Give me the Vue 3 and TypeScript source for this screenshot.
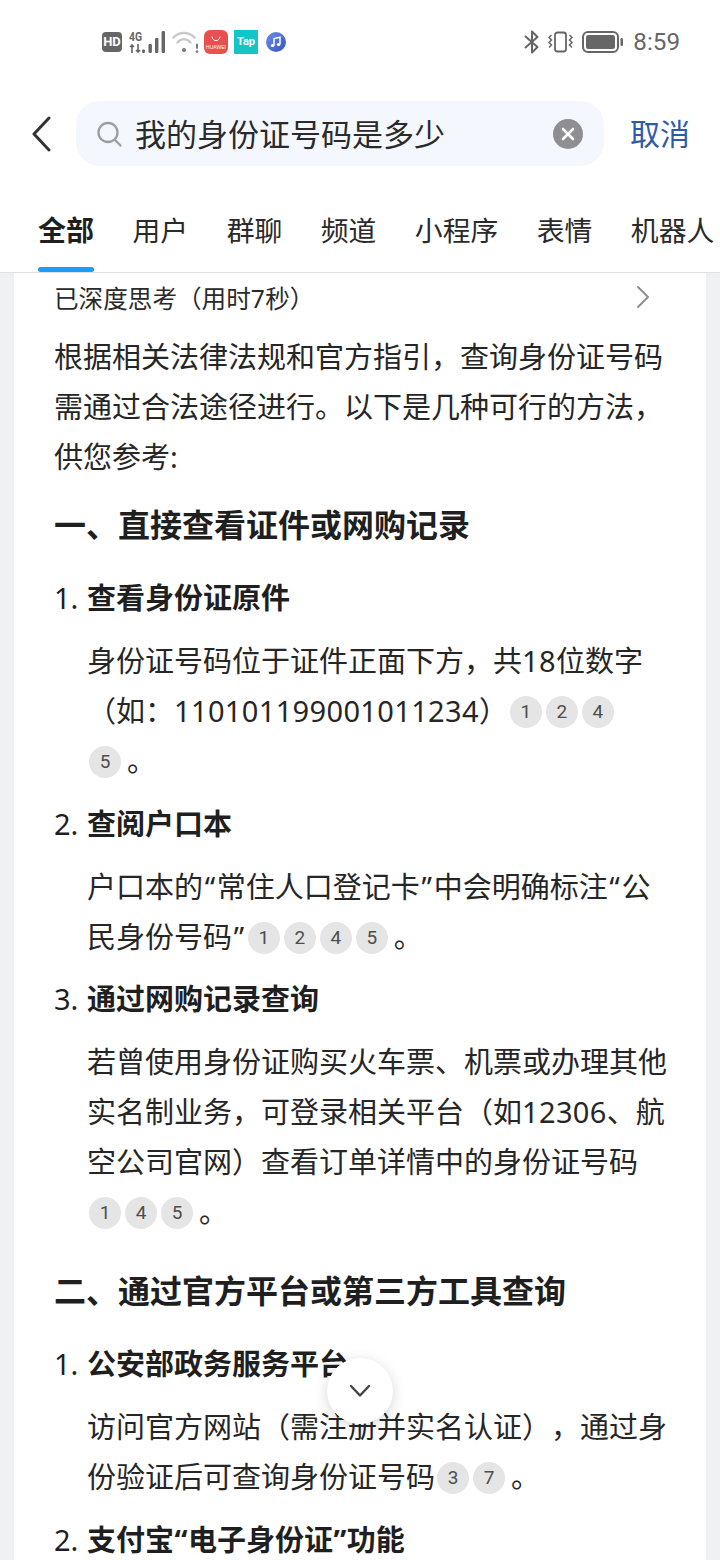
<script setup lang="ts">
const tabs: string[] = ['全部', '用户', '群聊', '频道', '小程序', '表情', '机器人']
</script>

<template>
  <div class="page">
    <div class="status">
      <div class="status-left">
        <span class="hd">HD</span>
        <div class="net">
          <div class="net-text">
            <span>4G</span>
            <svg width="12" height="9" viewBox="0 0 12 9" fill="none" stroke="#666" stroke-width="1.600">
              <path d="M3 9V1M1 3L3 1L5 3" />
              <path d="M9 0V8M7 6L9 8L11 6" />
            </svg>
          </div>
          <svg width="23" height="22" viewBox="0 0 23 22" class="bars">
            <rect x="0" y="18.500" width="3" height="3.500" rx="1.200" />
            <rect x="6.500" y="13" width="3.400" height="9" rx="1.200" />
            <rect x="13" y="7" width="3.400" height="15" rx="1.200" />
            <rect x="19.600" y="0" width="3.400" height="22" rx="1.200" />
          </svg>
        </div>
        <svg class="wifi" width="27" height="24" viewBox="0 0 27 24" fill="none" stroke="#c9c9c9" stroke-width="2.400" stroke-linecap="round">
          <path d="M1.500 7.500C7 1.500 17 1.500 22.500 7.500" />
          <path d="M5.500 12.500C9.500 8 14.500 8 18.500 12.500" />
          <circle cx="12" cy="20" r="2" fill="#777" stroke="none" />
          <path d="M25 14.500V18" stroke="#777" stroke-width="2" />
          <circle cx="25" cy="21.500" r="1.300" fill="#777" stroke="none" />
        </svg>
        <div class="app huawei">
          <svg width="10" height="6" viewBox="0 0 10 6" fill="none" stroke="#fff" stroke-width="1"><path d="M1 0.500C1.500 6 8.500 6 9 0.500" /></svg>
          <span>HUAWEI</span>
        </div>
        <div class="app tap">Tap</div>
        <svg class="music" width="20" height="20" viewBox="0 0 20 20">
          <defs>
            <linearGradient id="mg" x1="0" y1="0" x2="1" y2="1">
              <stop offset="0" stop-color="#6f8fe8" />
              <stop offset="1" stop-color="#3454c4" />
            </linearGradient>
          </defs>
          <circle cx="10" cy="10" r="10" fill="url(#mg)" />
          <path d="M8 13.500V6.500L14 5.200V12.300" fill="none" stroke="#fff" stroke-width="1.500" />
          <ellipse cx="6.600" cy="13.600" rx="1.800" ry="1.500" fill="#fff" />
          <ellipse cx="12.500" cy="12.400" rx="1.800" ry="1.500" fill="#fff" />
        </svg>
      </div>
      <div class="status-right">
        <svg width="16" height="24" viewBox="0 0 16 24" fill="none" stroke="#666" stroke-width="2" stroke-linejoin="round" stroke-linecap="round">
          <path d="M1.500 6.500L13.500 17L8 22.500V1.500L13.500 7L1.500 17.500" />
        </svg>
        <svg class="vib" width="27" height="22" viewBox="0 0 27 22" fill="none" stroke="#666" stroke-width="1.800">
          <rect x="8" y="1.500" width="11" height="19" rx="2.500" />
          <path d="M4.500 4L2 6.500L4.500 9L2 11.500L4.500 14L2 16.500" stroke-width="1.500" />
          <path d="M22.500 4L25 6.500L22.500 9L25 11.500L22.500 14L25 16.500" stroke-width="1.500" />
        </svg>
        <svg class="bat" width="42" height="22" viewBox="0 0 42 22">
          <rect x="1" y="1" width="35" height="20" rx="5" fill="none" stroke="#666" stroke-width="2" />
          <rect x="4" y="4" width="29" height="14" rx="2.500" fill="#666" />
          <rect x="38.500" y="7" width="2.500" height="8" rx="1.200" fill="#666" />
        </svg>
        <span class="time">8:59</span>
      </div>
    </div>

    <div class="search-row">
      <svg class="back" width="44" height="40" viewBox="0 0 44 40" fill="none" stroke="#333" stroke-width="3" stroke-linecap="round" stroke-linejoin="round">
        <path d="M17 4L2 20L17 36" />
      </svg>
      <div class="search">
        <svg width="25" height="26" viewBox="0 0 25 26" fill="none" stroke="#9a9da3" stroke-width="2.300" stroke-linecap="round">
          <circle cx="11" cy="11.500" r="9.500" />
          <path d="M18 19L23.500 24.500" />
        </svg>
        <span class="query">我的身份证号码是多少</span>
        <span class="clear">
          <svg width="14" height="14" viewBox="0 0 14 14" fill="none" stroke="#fff" stroke-width="2.600" stroke-linecap="round">
            <path d="M2 2L12 12M12 2L2 12" />
          </svg>
        </span>
      </div>
      <span class="cancel">取消</span>
    </div>

    <div class="tabs">
      <div v-for="(t, i) in tabs" :key="t" class="tab" :class="{ active: i === 0 }">{{ t }}</div>
    </div>

    <div class="main">
      <div class="card">
        <div class="think">
          <span>已深度思考（用时<span class="num">7</span>秒）</span>
          <svg width="14" height="24" viewBox="0 0 14 24" fill="none" stroke="#8f8f8f" stroke-width="2" stroke-linecap="round" stroke-linejoin="round">
            <path d="M2 2L12 12L2 22" />
          </svg>
        </div>
        <p class="para">根据相关法律法规和官方指引，查询身份证号码需通过合法途径进行。以下是几种可行的方法，供您参考:</p>

        <h2 class="h first">一、直接查看证件或网购记录</h2>
        <div class="sub first-sub"><span class="no">1.</span><b>查看身份证原件</b></div>
        <p class="body">身份证号码位于证件正面下方，共<span class="num">18</span>位数字（如：<span class="num">110101199001011234</span>）<span class="cite">1</span><span class="cite">2</span><span class="cite">4</span><br /><span class="cite">5</span><span class="end">。</span></p>
        <div class="sub roomy"><span class="no">2.</span><b>查阅户口本</b></div>
        <p class="body">户口本的<span class="q">“</span>常住人口登记卡<span class="q">”</span>中会明确标注<span class="q">“</span>公民身份号码<span class="q">”</span><span class="cite">1</span><span class="cite">2</span><span class="cite">4</span><span class="cite">5</span><span class="end">。</span></p>
        <div class="sub"><span class="no">3.</span><b>通过网购记录查询</b></div>
        <p class="body">若曾使用身份证购买火车票、机票或办理其他实名制业务，可登录相关平台（如<span class="num">12306</span>、航空公司官网）查看订单详情中的身份证号码<span class="cite">1</span><span class="cite">4</span><span class="cite">5</span><span class="end">。</span></p>

        <h2 class="h second">二、通过官方平台或第三方工具查询</h2>
        <div class="sub first-sub"><span class="no">1.</span><b>公安部政务服务平台</b></div>
        <p class="body">访问官方网站（需注册并实名认证），通过身份验证后可查询身份证号码<span class="cite">3</span><span class="cite">7</span><span class="end">。</span></p>
        <div class="sub roomy"><span class="no">2.</span><b>支付宝<span class="qb">“</span>电子身份证<span class="qb">”</span>功能</b></div>
      </div>
    </div>

    <button class="down" type="button" aria-label="scroll down">
      <svg width="22" height="14" viewBox="0 0 22 14" fill="none" stroke="#444" stroke-width="2.400" stroke-linecap="round" stroke-linejoin="round">
        <path d="M2 2L11 11.500L20 2" />
      </svg>
    </button>
  </div>
</template>

<style>
html, body { margin: 0; background: #fff; }
</style>

<style scoped>
.page {
  position: relative;
  width: 720px;
  height: 1560px;
  overflow: hidden;
  background: #fff;
  color: #222;
  font-family: "Noto Sans", "Noto Sans CJK SC", sans-serif;
  text-spacing-trim: space-all;
}
.status {
  height: 84px;
  display: flex;
  align-items: center;
  justify-content: space-between;
  padding: 0 40px 0 102px;
  box-sizing: border-box;
}
.status-left, .status-right { display: flex; align-items: center; }
.hd {
  width: 20px;
  height: 20px;
  border-radius: 4px;
  background: #666;
  color: #fff;
  font: 700 13px/20px "Roboto", sans-serif;
  text-align: center;
}
.net { display: flex; align-items: flex-end; margin-left: 7px; height: 22px; }
.net-text {
  display: flex;
  flex-direction: column;
  justify-content: space-between;
  height: 22px;
  color: #666;
  font: 700 13px/11px "Roboto", sans-serif;
  width: 13px;
}
.net-text span { display: block; transform: scaleX(0.8); transform-origin: left center; white-space: nowrap; }
.bars { fill: #666; }
.wifi { margin-left: 7px; }
.app {
  width: 24px;
  height: 24px;
  box-sizing: border-box;
  display: flex;
  flex-direction: column;
  align-items: center;
  justify-content: center;
  color: #fff;
}
.huawei {
  margin-left: 5px;
  background: #e8504f;
  border-radius: 6px;
  gap: 2px;
  padding-top: 1px;
}
.huawei span { font: 400 5px/6px "Liberation Sans", sans-serif; }
.tap {
  margin-left: 6px;
  background: #14c5c8;
  font: 700 11px/24px "Roboto", sans-serif;
}
.music { margin-left: 8px; }
.status-right svg { display: block; }
.vib { margin-left: 7px; }
.bat { margin-left: 8px; }
.time {
  margin-left: 9px;
  color: #666;
  font: 400 24.200px/30px "Roboto", sans-serif;
}
.search-row {
  display: flex;
  align-items: center;
  padding: 17px 0 0 32px;
}
.back { flex: none; }
.search {
  width: 528px;
  height: 65px;
  box-sizing: border-box;
  padding: 0 21px 0 21px;
  display: flex;
  align-items: center;
  border-radius: 24px;
  background: #f4f7fd;
}
.query {
  flex: 1;
  margin-left: 13px;
  font-size: 31px;
  line-height: 40px;
  color: #2a2a2a;
}
.clear {
  width: 30px;
  height: 30px;
  border-radius: 50%;
  background: #8e8e93;
  display: flex;
  align-items: center;
  justify-content: center;
}
.cancel {
  margin-left: 26px;
  font-size: 30px;
  line-height: 40px;
  color: #2d5ba6;
}
.tabs {
  position: relative;
  margin-top: 24px;
  height: 82px;
  padding-left: 38px;
  display: flex;
  gap: 38.500px;
  align-items: center;
  border-bottom: 1px solid #e0e1e3;
  white-space: nowrap;
}
.tab {
  position: relative;
  height: 82px;
  line-height: 80px;
  font-size: 27.800px;
  color: #2a2a2a;
}
.tab.active { font-size: 28px; font-weight: 700; color: #1f1f1f; }
.tab.active::after {
  content: "";
  position: absolute;
  left: 0;
  right: 0;
  bottom: 0;
  height: 5px;
  border-radius: 3px;
  background: #1a9df2;
}
.main {
  background: #f0f1f3;
  padding: 0 14px;
}
.card {
  background: #fff;
  padding: 0 36px 40px 40px;
}
.think {
  height: 48px;
  margin-bottom: 11px;
  display: flex;
  align-items: center;
  justify-content: space-between;
  margin-right: 20px;
  font-size: 24.600px;
  color: #2a2a2a;
}
p { margin: 0; }
.para, .body { font-size: 29px; line-height: 50px; color: #262626; }
.num { letter-spacing: 0.350px; }
.q { padding: 0 1.700px; }
.qb { padding: 0 0.500px; }
.end { margin-left: 4px; }
.h {
  margin: 0;
  font-size: 32px;
  line-height: 50px;
  font-weight: 700;
  color: #1f1f1f;
}
.h.first { margin-top: 18px; }
.h.second { margin-top: 29px; }
.sub {
  margin-top: 12px;
  display: flex;
  font-size: 29px;
  line-height: 50px;
  color: #1f1f1f;
}
.sub.roomy { margin-top: 13px; }
.sub.first-sub { margin-top: 23px; }
.no { width: 33px; flex: none; }
.sub b { font-weight: 700; }
.body { margin-top: 13px; padding-left: 33px; }
.cite {
  display: inline-flex;
  align-items: center;
  justify-content: center;
  width: 32px;
  height: 32px;
  margin: 0 2px 0 2px;
  border-radius: 50%;
  background: #e5e5e5;
  color: #4d4d4d;
  font: 400 19px/32px "Roboto", sans-serif;
  vertical-align: 4px;
}
.down {
  position: absolute;
  left: 327px;
  top: 1358px;
  width: 66px;
  height: 66px;
  padding: 0;
  border: none;
  border-radius: 50%;
  background: #fff;
  box-shadow: 0 3px 14px rgba(0, 0, 0, 0.16);
  display: flex;
  align-items: center;
  justify-content: center;
}
</style>
